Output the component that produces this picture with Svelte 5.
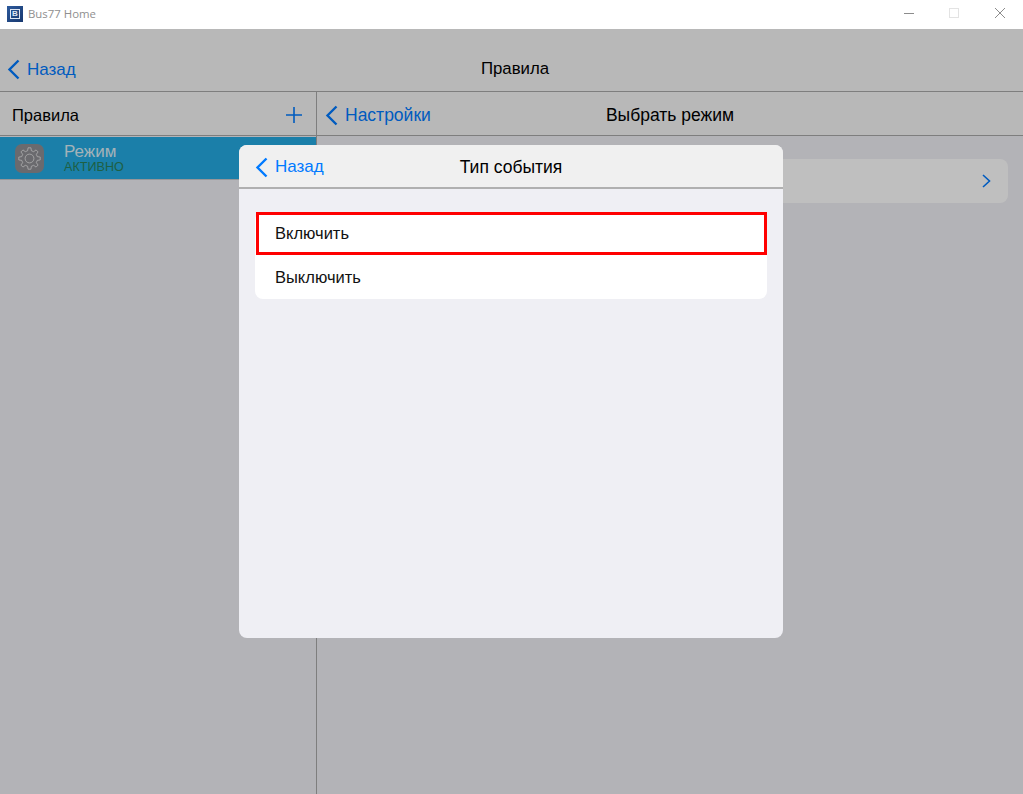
<script>
  const options = ['Включить', 'Выключить'];

  // 8-tooth outline for the settings icon
  function gearPath(cx, cy, outer, inner, teeth) {
    const pts = [];
    const step = (Math.PI * 2) / teeth;
    for (let i = 0; i < teeth; i++) {
      const a = i * step - Math.PI / 2;
      const w = step * 0.17;
      const v = step * 0.3;
      pts.push([inner, a - v], [outer, a - w], [outer, a + w], [inner, a + v]);
    }
    return (
      pts
        .map(([r, a], i) => `${i ? 'L' : 'M'}${(cx + r * Math.cos(a)).toFixed(2)} ${(cy + r * Math.sin(a)).toFixed(2)}`)
        .join(' ') + ' Z'
    );
  }
  const gear = gearPath(14.5, 14.5, 10.8, 8, 8);
</script>

{#snippet chevron()}
  <svg class="chevron" width="13" height="21" viewBox="0 0 13 21" fill="none" stroke="currentColor" stroke-width="2.4">
    <polyline points="11.5,1.5 2.5,10.5 11.5,19.5" />
  </svg>
{/snippet}

<div class="window">
  <header class="titlebar">
    <div class="app-icon"><span>B</span></div>
    <span class="app-name">Bus77 Home</span>
    <div class="controls">
      <svg width="12" height="12" viewBox="0 0 12 12"><line x1="0" y1="5.5" x2="10" y2="5.5" stroke="#8c8c8c" /></svg>
      <svg width="12" height="12" viewBox="0 0 12 12"><rect x="0.5" y="0.5" width="9" height="9" fill="none" stroke="#e3e3e3" /></svg>
      <svg width="12" height="12" viewBox="0 0 12 12"><path d="M1 0 L11 10 M11 0 L1 10" stroke="#8c8c8c" /></svg>
    </div>
  </header>

  <div class="app">
    <nav class="topnav">
      <div class="back">{@render chevron()}<span>Назад</span></div>
      <div class="nav-title">Правила</div>
    </nav>

    <div class="split">
      <aside class="sidebar">
        <div class="bar">
          <span class="bar-title">Правила</span>
          <svg class="plus" width="16" height="16" viewBox="0 0 16 16"><path d="M8 0 V16 M0 8 H16" stroke="#007aff" stroke-width="1.6" /></svg>
        </div>
        <div class="rule">
          <div class="rule-icon">
            <svg width="29" height="29" viewBox="0 0 29 29" fill="none" stroke="#fff" stroke-opacity="0.8" stroke-width="0.8" stroke-linejoin="round">
              <path d={gear} />
              <circle cx="14.5" cy="14.5" r="4.4" />
            </svg>
          </div>
          <div class="rule-text">
            <span class="rule-name">Режим</span>
            <span class="rule-state">АКТИВНО</span>
          </div>
        </div>
      </aside>

      <main class="detail">
        <div class="bar detail-bar">
          <div class="back wide">{@render chevron()}<span>Настройки</span></div>
          <div class="nav-title wide">Выбрать режим</div>
        </div>
        <div class="detail-row">
          <svg width="9" height="14" viewBox="0 0 9 14" fill="none" stroke="#007aff" stroke-width="1.6"><polyline points="1,1 7.5,7 1,13" /></svg>
        </div>
      </main>
    </div>

    <div class="scrim"></div>

    <section class="modal">
      <div class="modal-head">
        <div class="back">{@render chevron()}<span>Назад</span></div>
        <div class="nav-title wide">Тип события</div>
      </div>
      <div class="modal-body">
        <ul class="list">
          {#each options as option, i}
            <li class:marked={i === 0}>{option}</li>
          {/each}
        </ul>
      </div>
    </section>
  </div>
</div>

<style>
  :global(body) {
    margin: 0;
    overflow: hidden;
  }

  .window {
    width: 1023px;
    height: 794px;
    display: flex;
    flex-direction: column;
    font-family: "Liberation Sans", Arial, sans-serif;
    background: #fff;
  }

  .titlebar {
    height: 29px;
    flex: none;
    display: flex;
    align-items: center;
    padding-left: 7px;
    padding-bottom: 1px;
    box-sizing: border-box;
    background: #fff;
  }

  .app-icon {
    width: 16px;
    height: 16px;
    background: linear-gradient(135deg, #2d5a9c, #17386f);
    display: flex;
    align-items: center;
    justify-content: center;
  }

  .app-icon span {
    width: 8px;
    height: 8px;
    border: 1px solid #dfe6f2;
    color: #dfe6f2;
    font-size: 8px;
    line-height: 8px;
    text-align: center;
    font-weight: 700;
  }

  .app-name {
    margin-left: 5px;
    padding-bottom: 2px;
    font-family: "Open Sans", sans-serif;
    font-size: 11.4px;
    color: #8f8f8f;
  }

  .controls {
    margin-left: auto;
    display: flex;
    gap: 33px;
    padding-right: 17px;
  }

  .app {
    position: relative;
    flex: 1;
    display: flex;
    flex-direction: column;
    background: #efeff4;
    min-height: 0;
  }

  .topnav {
    height: 63px;
    flex: none;
    box-sizing: border-box;
    position: relative;
    display: flex;
    align-items: flex-end;
    background: #f6f6f6;
    border-bottom: 1px solid #a8a8a8;
  }

  .topnav .back {
    padding: 0 0 11px 7px;
  }

  .topnav .nav-title {
    padding-bottom: 12px;
    padding-left: 7px;
    font-size: 16.8px;
  }

  .nav-title {
    position: absolute;
    left: 0;
    right: 0;
    text-align: center;
    font-size: 17px;
    color: #000;
    pointer-events: none;
  }

  .nav-title.wide,
  .back.wide {
    font-size: 17.5px;
  }

  .back {
    display: flex;
    align-items: center;
    gap: 7px;
    color: #007aff;
    font-size: 17px;
  }

  .chevron {
    display: block;
  }

  .split {
    flex: 1;
    display: flex;
    min-height: 0;
  }

  .sidebar {
    width: 317px;
    flex: none;
    box-sizing: border-box;
    border-right: 1px solid #a8a8a8;
  }

  .bar {
    height: 44px;
    box-sizing: border-box;
    padding-top: 3px;
    display: flex;
    align-items: center;
    justify-content: space-between;
    background: #f6f6f6;
    border-bottom: 1px solid #a8a8a8;
    position: relative;
  }

  .bar-title {
    padding-left: 12px;
    font-size: 16.5px;
    color: #000;
  }

  .plus {
    margin-right: 14px;
  }

  .rule {
    height: 43px;
    margin-top: 1px;
    box-sizing: border-box;
    display: flex;
    align-items: center;
    padding-left: 15px;
    background: #25aae2;
    border-bottom: 1px solid #c8c8cc;
  }

  .rule-icon {
    width: 29px;
    height: 29px;
    border-radius: 7px;
    background: #8e8e93;
  }

  .rule-icon svg {
    display: block;
  }

  .rule-text {
    margin-left: 20px;
    display: flex;
    flex-direction: column;
  }

  .rule-name {
    font-size: 17px;
    line-height: 17px;
    color: #dceef6;
  }

  .rule-state {
    font-size: 12.6px;
    line-height: 13px;
    margin-top: 1px;
    color: #28805a;
  }

  .detail {
    flex: 1;
    min-width: 0;
  }

  .detail-bar {
    justify-content: flex-start;
  }

  .detail-bar .back {
    padding-left: 8px;
  }

  .detail-row {
    height: 44px;
    margin: 23px 15px 0;
    padding-right: 17px;
    border-radius: 8px;
    background: #fff;
    display: flex;
    align-items: center;
    justify-content: flex-end;
  }

  .scrim {
    position: absolute;
    inset: 0;
    background: rgba(0, 0, 0, 0.25);
  }

  .modal {
    position: absolute;
    left: 239px;
    top: 116px;
    width: 544px;
    height: 493px;
    border-radius: 8px;
    overflow: hidden;
    background: #efeff4;
    display: flex;
    flex-direction: column;
  }

  .modal-head {
    height: 44px;
    flex: none;
    box-sizing: border-box;
    padding-top: 2px;
    position: relative;
    display: flex;
    align-items: center;
    padding-left: 16px;
    background: #f0f0f0;
    border-bottom: 2px solid #b0b0b0;
  }

  .modal-body {
    padding: 23px 16px 0;
  }

  .list {
    list-style: none;
    margin: 0;
    padding: 0;
    background: #fff;
    border-radius: 8px;
  }

  .list li {
    height: 44px;
    box-sizing: border-box;
    display: flex;
    align-items: center;
    padding-left: 20px;
    font-size: 16.5px;
    color: #111;
  }

  .list li.marked {
    height: 43px;
    margin-left: 1px;
    padding-left: 16px;
    border: 3px solid #ff0000;
  }
</style>
